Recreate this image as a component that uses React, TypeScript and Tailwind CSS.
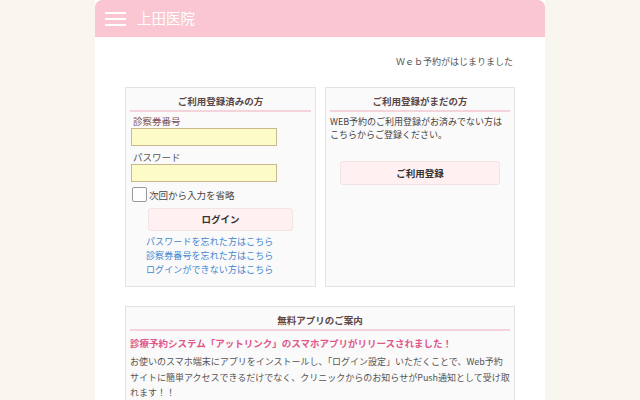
import React from "react";

const font = { fontFamily: '"Noto Sans CJK JP", "Noto Sans", sans-serif' };

function BoxTitle({ children }: { children: React.ReactNode }) {
  return (
    <div className="mx-[4px] border-b-2 border-[#f5d3da] pt-[6px] pb-[2px] text-center text-[9.5px] font-bold leading-[14px] text-[#5b4646]">
      {children}
    </div>
  );
}

export default function App() {
  return (
    <div className="min-h-[400px] w-full bg-[#f9f6f0]" style={font}>
      <div className="mx-auto w-[450px] min-h-[400px] bg-white">
        <div className="flex h-[37px] items-center rounded-t-[7px] bg-[#f9c6d2] pl-[10px]">
          <div className="flex w-[21px] flex-col gap-[4px]">
            <div className="h-[2px] bg-white" />
            <div className="h-[2px] bg-white" />
            <div className="h-[2px] bg-white" />
          </div>
          <div className="ml-[11px] text-[14.5px] leading-none text-white">上田医院</div>
        </div>
        <div className="px-[30px]">
          <div className="pt-[19px] pr-[2px] text-right text-[9px] leading-[12px] text-[#555]">
            Ｗｅｂ予約がはじまりました
          </div>
          <div className="mt-[19px] grid grid-cols-[191px_190px] gap-[9px]">
            <div className="h-[200px] border border-[#e5e3e0] bg-[#fafafa]">
              <BoxTitle>ご利用登録済みの方</BoxTitle>
              <div className="px-[5px]">
                <div className="mt-[3px] pl-[2px] text-[9.5px] leading-[12px] text-[#7a4f55]">診察券番号</div>
                <div className="mt-[1px] h-[18px] w-[146px] border border-[#c9b88e] bg-[#fdfbc8]" />
                <div className="mt-[5px] pl-[2px] text-[9.5px] leading-[12px] text-[#555]">パスワード</div>
                <div className="mt-[1px] h-[18px] w-[146px] border border-[#c9b88e] bg-[#fdfbc8]" />
                <div className="mt-[5px] flex items-center">
                  <div className="ml-[1px] h-[15px] w-[15px] rounded-[2px] border border-[#999] bg-white" />
                  <div className="ml-[2px] text-[9.5px] leading-[12px] text-[#444]">次回から入力を省略</div>
                </div>
                <div className="ml-[17px] mt-[6px] flex h-[23px] w-[145px] items-center justify-center rounded-[3px] border border-[#f3e4e4] bg-[#fff1f1] text-[9.5px] font-bold text-[#333]">
                  ログイン
                </div>
                <div className="ml-[15px] mt-[4px] flex flex-col text-[9px] leading-[14px] tracking-[0.1px] text-[#3f86cf]">
                  <span>パスワードを忘れた方はこちら</span>
                  <span>診察券番号を忘れた方はこちら</span>
                  <span>ログインができない方はこちら</span>
                </div>
              </div>
            </div>
            <div className="h-[200px] border border-[#e5e3e0] bg-[#fafafa]">
              <BoxTitle>ご利用登録がまだの方</BoxTitle>
              <div className="px-[4px] pt-[3px] text-[9px] leading-[13px] text-[#444]">
                WEB予約のご利用登録がお済みでない方は
                <br />
                こちらからご登録ください。
              </div>
              <div className="mx-[14px] mt-[20px] flex h-[24px] items-center justify-center rounded-[3px] border border-[#f3e4e4] bg-[#fff1f1] text-[9.5px] font-bold text-[#333]">
                ご利用登録
              </div>
            </div>
          </div>
          <div className="mt-[19px] border border-[#e5e3e0] bg-[#fafafa] pb-[10px]">
            <BoxTitle>無料アプリのご案内</BoxTitle>
            <div className="px-[4px]">
              <div className="mt-[5px] text-[9.5px] font-bold leading-[14px] text-[#e0578a]">
                診療予約システム「アットリンク」のスマホアプリがリリースされました！
              </div>
              <div className="mt-[4px] whitespace-nowrap text-[9px] leading-[15.5px] text-[#555]">
                <div>お使いのスマホ端末にアプリをインストールし、「ログイン設定」いただくことで、Web予約</div>
                <div>サイトに簡単アクセスできるだけでなく、クリニックからのお知らせがPush通知として受け取</div>
                <div>れます！！</div>
                <div>また、通知されたメッセージからご予約状況をいつでも確認できます。</div>
              </div>
            </div>
          </div>
        </div>
      </div>
    </div>
  );
}
